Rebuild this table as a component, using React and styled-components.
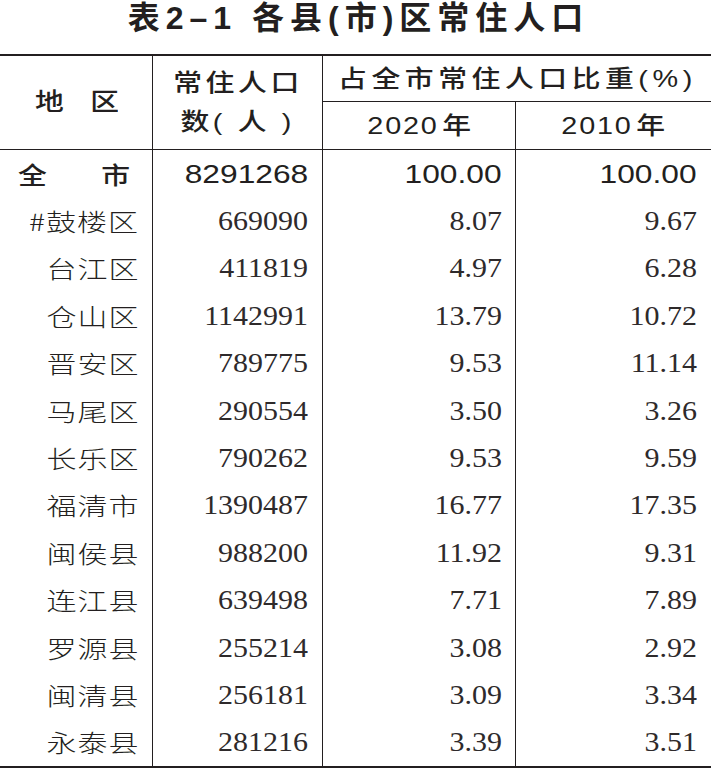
import React from 'react';
import styled, { createGlobalStyle } from 'styled-components';

const ink = '#231f20';
const COLS = '152px 170px 193px 196px';

const Global = createGlobalStyle`
  *, *::before, *::after { box-sizing: border-box; }
  html, body { margin: 0; padding: 0; background: #fff; }
  body { width: 711px; overflow: hidden; }
`;

const Page = styled.div`
  width: 711px;
  color: ${ink};
  font-family: "Liberation Sans", "Noto Sans CJK SC", sans-serif;
`;

const Title = styled.h1`
  margin: 0;
  height: 54px;
  display: flex;
  justify-content: center;
  align-items: flex-start;
  padding-left: 6px;
  font-size: 32px;
  line-height: 36px;
  font-weight: 700;
  letter-spacing: 6px;
`;

const Table = styled.div`
  border-top: 2px solid ${ink};
  border-bottom: 2px solid ${ink};
`;

const Head = styled.div`
  display: grid;
  grid-template-columns: ${COLS};
  grid-template-rows: 46px 47px;
  border-bottom: 1.5px solid ${ink};
  font-size: 24px;
  font-weight: 500;
`;

const HeadCell = styled.div`
  grid-row: span ${(p) => p.$rows || 1};
  grid-column: span ${(p) => p.$cols || 1};
  border-left: ${(p) => (p.$first ? 'none' : `1.3px solid ${ink}`)};
  border-bottom: ${(p) => (p.$underline ? `1.3px solid ${ink}` : 'none')};
  display: flex;
  flex-direction: column;
  align-items: center;
  justify-content: center;
  line-height: 39px;
  padding-bottom: ${(p) => p.$pb || 0}px;
`;

const Wide = styled.span`
  display: inline-block;
  white-space: nowrap;
  transform: scaleX(${(p) => p.$sx || 1});
  transform-origin: ${(p) => p.$origin || 'right'} center;
  letter-spacing: ${(p) => p.$ls ?? 0}px;
`;

const YearMark = styled.span`
  margin-left: 3px;
  letter-spacing: 0;
`;

const Row = styled.div`
  display: grid;
  grid-template-columns: ${COLS};
  height: 47.4px;
`;

const NameCell = styled.div`
  display: flex;
  align-items: center;
  justify-content: flex-end;
  padding-right: 13px;
  font-family: "Noto Sans CJK SC", sans-serif;
  font-weight: 300;
  font-size: 24px;
  line-height: 1;
`;

const TotalName = styled.div`
  display: flex;
  align-items: center;
  justify-content: space-between;
  padding: 0 22px 0 18px;
  font-family: "Noto Sans CJK SC", sans-serif;
  font-weight: 500;
  font-size: 24px;
  line-height: 1;
`;

const NumCell = styled.div`
  border-left: 1.3px solid ${ink};
  display: flex;
  align-items: center;
  justify-content: flex-end;
  padding-right: ${(p) => p.$pr}px;
  line-height: 1;
  font-family: ${(p) => (p.$total ? '"Liberation Sans", sans-serif' : '"Liberation Serif", serif')};
  font-size: ${(p) => (p.$total ? 26 : 28)}px;
  color: ${(p) => (p.$total ? ink : '#2e2a2b')};
`;

const rows = [
  ['#鼓楼区', '669090', '8.07', '9.67'],
  ['台江区', '411819', '4.97', '6.28'],
  ['仓山区', '1142991', '13.79', '10.72'],
  ['晋安区', '789775', '9.53', '11.14'],
  ['马尾区', '290554', '3.50', '3.26'],
  ['长乐区', '790262', '9.53', '9.59'],
  ['福清市', '1390487', '16.77', '17.35'],
  ['闽侯县', '988200', '11.92', '9.31'],
  ['连江县', '639498', '7.71', '7.89'],
  ['罗源县', '255214', '3.08', '2.92'],
  ['闽清县', '256181', '3.09', '3.34'],
  ['永泰县', '281216', '3.39', '3.51'],
];

const PADS = [14, 13, 14];

export default function App() {
  return (
    <Page>
      <Global />
      <Title>表2–1 各县(市)区常住人口</Title>
      <Table>
        <Head>
          <HeadCell $rows={2} $first $pb={2}>
            <Wide $sx={1.2} $origin="center" $ls={-1}>地　区</Wide>
          </HeadCell>
          <HeadCell $rows={2} $pb={2}>
            <Wide $sx={1.2} $origin="center" $ls={3}>常住人口</Wide>
            <Wide $sx={1.2} $origin="center" $ls={3}>数( 人 )</Wide>
          </HeadCell>
          <HeadCell $cols={2} $underline>
            <Wide $sx={1.2} $origin="center" $ls={3.8}>占全市常住人口比重(%)</Wide>
          </HeadCell>
          <HeadCell>
            <Wide $sx={1.2} $origin="center" $ls={1.5}>2020<YearMark>年</YearMark></Wide>
          </HeadCell>
          <HeadCell>
            <Wide $sx={1.2} $origin="center" $ls={1.5}>2010<YearMark>年</YearMark></Wide>
          </HeadCell>
        </Head>
        <Row>
          <TotalName>
            <Wide $sx={1.2} $origin="left">全</Wide>
            <Wide $sx={1.2}>市</Wide>
          </TotalName>
          {['8291268', '100.00', '100.00'].map((v, i) => (
            <NumCell key={i} $total $pr={PADS[i]}>
              <Wide $sx={1.22}>{v}</Wide>
            </NumCell>
          ))}
        </Row>
        {rows.map(([name, ...vals]) => (
          <Row key={name}>
            <NameCell>
              <Wide $sx={1.25} $ls={0.8}>{name}</Wide>
            </NameCell>
            {vals.map((v, i) => (
              <NumCell key={i} $pr={PADS[i]}>
                <Wide $sx={1.07}>{v}</Wide>
              </NumCell>
            ))}
          </Row>
        ))}
      </Table>
    </Page>
  );
}
